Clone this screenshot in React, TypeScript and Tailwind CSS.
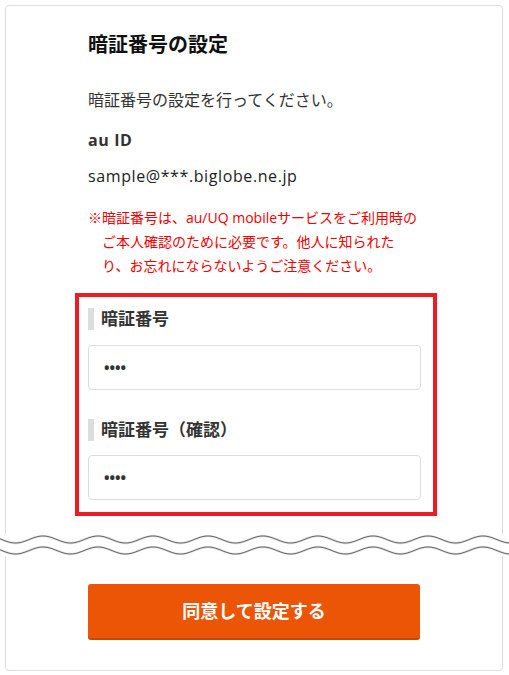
import React from "react";

const font = {
  fontFamily: '"Open Sans", "Noto Sans CJK JP", sans-serif',
};

// 波線（省略を示す区切り）
const Wave = () => {
  const w = 509;
  const period = 55;
  const amp = 3.5;
  const line = (cy: number) => {
    let d = "";
    for (let x = 0; x <= w; x += 1) {
      const y = cy - amp * Math.cos((2 * Math.PI * (x - 43)) / period);
      d += (x === 0 ? "M" : "L") + x + " " + y.toFixed(2) + " ";
    }
    return d;
  };
  const top = line(5.5);
  const bottom = line(16.5);
  return (
    <div className="-mx-[88px] mt-[18px] h-[22px] bg-white">
      <svg width={w} height={22} viewBox={`0 0 ${w} 22`} className="block overflow-visible">
        <path d={top} fill="none" stroke="#e2e2e2" strokeWidth={2.4} />
        <path d={bottom} fill="none" stroke="#e2e2e2" strokeWidth={2.4} />
        <path d={top} fill="none" stroke="#666666" strokeWidth={1} />
        <path d={bottom} fill="none" stroke="#666666" strokeWidth={1} />
      </svg>
    </div>
  );
};

const Label = ({ children }: { children: React.ReactNode }) => (
  <div className="border-l-[6px] border-[#dddddd] pl-[7px] text-[17px] font-bold leading-[22px] text-[#333333]">
    {children}
  </div>
);

const Field = () => (
  <div className="flex h-[45px] items-center rounded-[4px] border border-[#dddddd] bg-white pl-[14px]">
    <span className="text-[20px] leading-none tracking-[-2px] text-[#333333]">••••</span>
  </div>
);

export default function App() {
  return (
    <div className="min-h-[675px] bg-white pt-[5px]" style={font}>
      <div className="ml-[5px] w-[498px] rounded-[4px] border border-[#dddddd] bg-white px-[82px] pt-[24px] pb-[32px]">
        {/* 見出し */}
        <h1 className="text-[20px] font-bold leading-[30px] text-[#111111]">暗証番号の設定</h1>
        <p className="mt-[28px] text-[16px] leading-[24px] text-[#333333]">暗証番号の設定を行ってください。</p>

        {/* au ID */}
        <div className="mt-[16px] text-[16px] font-bold leading-[24px] tracking-[0.6px] text-[#333333]">au ID</div>
        <div className="mt-[12px] text-[16px] leading-[24px] tracking-[0.6px] text-[#222222]">sample@***.biglobe.ne.jp</div>

        {/* 注意書き */}
        <p className="mt-[18px] pl-[14px] -indent-[14px] text-[14px] leading-[24px] text-[#ee0000]">
          ※暗証番号は、au/UQ mobileサービスをご利用時の
          <br />
          ご本人確認のために必要です。他人に知られた
          <br />
          り、お忘れにならないようご注意ください。
        </p>

        {/* 入力欄 */}
        <div className="mt-[15px] -ml-[13px] w-[362px] border-4 border-[#ed1c24] pt-[11px] pr-[12px] pb-[12px] pl-[9px]">
          <Label>暗証番号</Label>
          <div className="mt-[15px]">
            <Field />
          </div>
          <div className="mt-[29px]">
            <Label>暗証番号（確認）</Label>
          </div>
          <div className="mt-[14px]">
            <Field />
          </div>
        </div>

        <Wave />

        {/* ボタン */}
        <button
          type="button"
          className="mt-[28px] flex h-[54px] w-full items-center justify-center rounded-[3px] bg-[#eb5505] text-[18px] font-bold text-white shadow-[0_2px_0_#c84700]"
        >
          同意して設定する
        </button>
      </div>
    </div>
  );
}
